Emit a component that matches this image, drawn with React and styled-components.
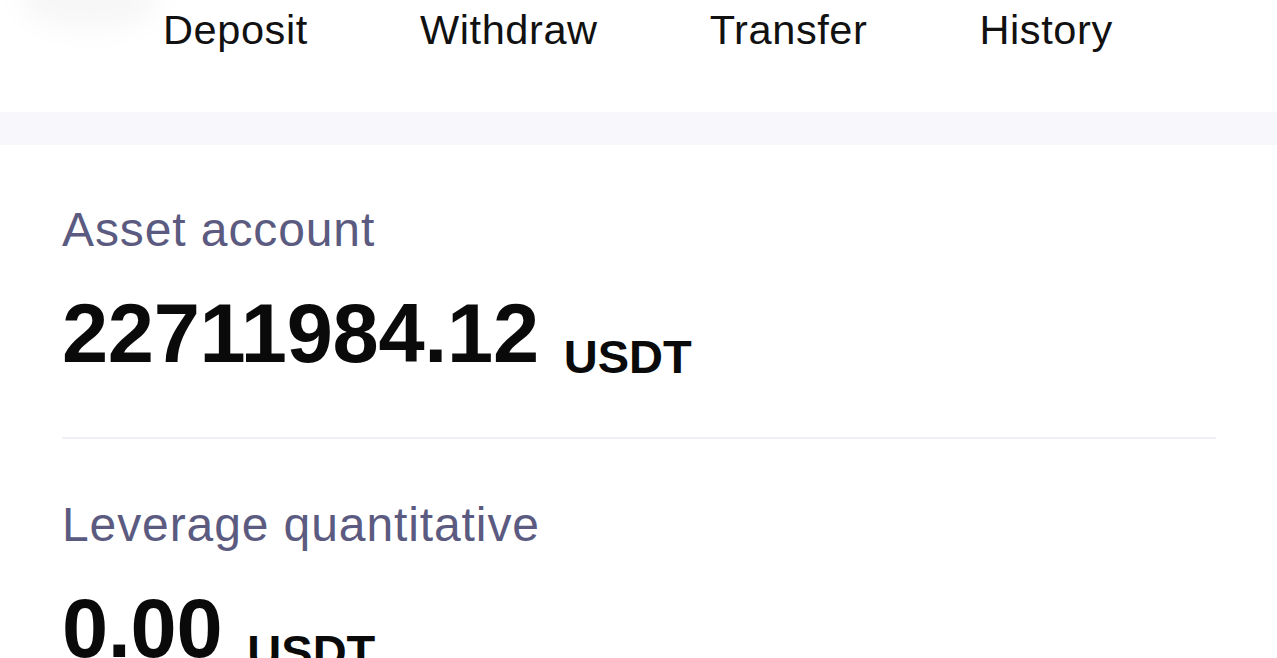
import React from "react";
import styled, { createGlobalStyle } from "styled-components";

const Global = createGlobalStyle`
  html, body { margin: 0; padding: 0; background: #ffffff; }
  body { font-family: "Liberation Sans", Arial, sans-serif; overflow: hidden; }
`;

const Page = styled.div`
  width: 1277px;
  height: 658px;
  overflow: hidden;
  background: #ffffff;
  position: relative;
`;

const Glow = styled.div`
  position: absolute;
  left: 20px;
  top: -30px;
  width: 140px;
  height: 60px;
  border-radius: 50%;
  background: rgba(0, 0, 0, 0.03);
  filter: blur(12px);
`;

const Nav = styled.nav`
  display: flex;
  gap: 112px;
  padding: 8px 0 0 163px;
  height: 112px;
  box-sizing: border-box;
`;

const NavItem = styled.span`
  font-size: 41.5px;
  color: #111111;
  line-height: 44px;
  letter-spacing: 0.6px;
`;

const Band = styled.div`
  height: 33px;
  background: #f7f7fc;
`;

const Section = styled.section`
  padding: 0 61px 0 62px;
  display: flex;
  flex-direction: column;
`;

const Block = styled.div`
  display: flex;
  flex-direction: column;
  padding-top: ${(p) => p.$top}px;
  padding-bottom: ${(p) => p.$bottom}px;
  border-bottom: ${(p) => (p.$divider ? "2px solid #efeff8" : "none")};
`;

const Label = styled.div`
  font-size: 48px;
  color: #5b5a80;
  line-height: 56px;
  letter-spacing: 0.9px;
`;

const AmountRow = styled.div`
  display: flex;
  align-items: flex-end;
  gap: 25px;
  margin-top: ${(p) => p.$gap}px;
`;

const Amount = styled.span`
  font-size: 83px;
  font-weight: 700;
  color: #0a0a0a;
  line-height: 82px;
  letter-spacing: -0.3px;
`;

const Unit = styled.span`
  font-size: 47px;
  font-weight: 700;
  color: #0a0a0a;
  line-height: 46px;
  margin-bottom: -5px;
`;

export default function App() {
  return (
    <Page>
      <Global />
      <Glow />
      <Nav>
        <NavItem>Deposit</NavItem>
        <NavItem>Withdraw</NavItem>
        <NavItem>Transfer</NavItem>
        <NavItem>History</NavItem>
      </Nav>
      <Band />
      <Section>
        <Block $top={57} $bottom={62} $divider>
          <Label>Asset account</Label>
          <AmountRow $gap={35}>
            <Amount>22711984.12</Amount>
            <Unit>USDT</Unit>
          </AmountRow>
        </Block>
        <Block $top={58} $bottom={0}>
          <Label>Leverage quantitative</Label>
          <AmountRow $gap={35}>
            <Amount>0.00</Amount>
            <Unit>USDT</Unit>
          </AmountRow>
        </Block>
      </Section>
    </Page>
  );
}
